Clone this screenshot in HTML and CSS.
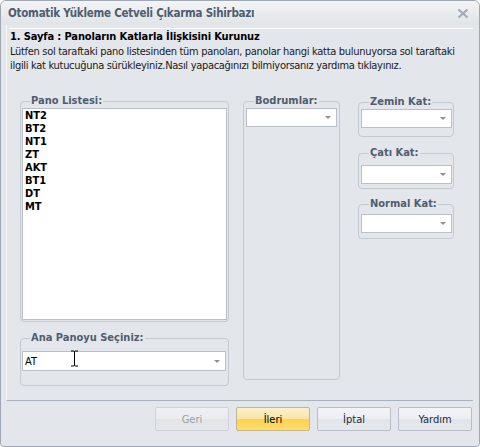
FILE: index.html
```html
<!DOCTYPE html>
<html lang="tr">
<head>
<meta charset="utf-8">
<link rel="stylesheet" href="styles.css">
</head>
<body>
<div class="window">
  <div class="titlebar">
    <span class="title">Otomatik Yükleme Cetveli Çıkarma Sihirbazı</span>
    <svg class="close" width="12" height="11" viewBox="0 0 12 11"><path d="M1.5 1.5 L10.5 9.5 M10.5 1.5 L1.5 9.5" stroke="#a3abb5" stroke-width="2.2" fill="none"/></svg>
  </div>
  <div class="panel">
    <div class="header">1. Sayfa : Panoların Katlarla İlişkisini Kurunuz</div>
    <div class="desc">Lütfen sol taraftaki pano listesinden tüm panoları, panolar hangi katta bulunuyorsa sol taraftaki<br>ilgili kat kutucuğuna sürükleyiniz.Nasıl yapacağınızı bilmiyorsanız yardıma tıklayınız.</div>
    <div class="groups">
      <div class="col col-left">
        <fieldset class="grp grp-list">
          <legend>Pano Listesi:</legend>
          <div class="listbox">
            <div>NT2</div><div>BT2</div><div>NT1</div><div>ZT</div><div>AKT</div><div>BT1</div><div>DT</div><div>MT</div>
          </div>
        </fieldset>
        <fieldset class="grp grp-ana">
          <legend>Ana Panoyu Seçiniz:</legend>
          <div class="combo combo-wide"><span class="val">AT</span><span class="arrow"></span>
            <svg class="ibeam" width="9" height="17" viewBox="0 0 9 17"><path d="M1 1 H3.5 Q4.5 1 4.5 2 V15 Q4.5 16 3.5 16 H1 M8 1 H5.5 Q4.5 1 4.5 2 M4.5 15 Q4.5 16 5.5 16 H8" stroke="#000" stroke-width="1" fill="none"/></svg>
          </div>
        </fieldset>
      </div>
      <div class="col col-mid">
        <fieldset class="grp grp-bod">
          <legend>Bodrumlar:</legend>
          <div class="combo"><span class="val"></span><span class="arrow"></span></div>
        </fieldset>
      </div>
      <div class="col col-right">
        <fieldset class="grp grp-small grp-zemin">
          <legend>Zemin Kat:</legend>
          <div class="combo"><span class="val"></span><span class="arrow"></span></div>
        </fieldset>
        <fieldset class="grp grp-small grp-cati">
          <legend>Çatı Kat:</legend>
          <div class="combo"><span class="val"></span><span class="arrow"></span></div>
        </fieldset>
        <fieldset class="grp grp-small grp-normal">
          <legend>Normal Kat:</legend>
          <div class="combo"><span class="val"></span><span class="arrow"></span></div>
        </fieldset>
      </div>
    </div>
  </div>
  <div class="buttons">
    <button class="btn disabled">Geri</button>
    <button class="btn primary">İleri</button>
    <button class="btn">İptal</button>
    <button class="btn">Yardım</button>
  </div>
</div>
</body>
</html>
```
FILE: styles.css
```css
html, body {
  margin: 0;
  padding: 0;
  background: #ffffff;
}
body {
  font-family: "DejaVu Sans", Verdana, sans-serif;
  font-stretch: condensed;
  font-size: 11px;
  color: #000;
}
.window {
  width: 480px;
  height: 447px;
  box-sizing: border-box;
  border: 1px solid #9ea7b2;
  border-radius: 6px 6px 4px 4px;
  background: #e3e6ea;
  display: flex;
  flex-direction: column;
  overflow: hidden;
}
.titlebar {
  height: 24px;
  flex: none;
  display: flex;
  align-items: center;
  justify-content: space-between;
  padding: 0 10px 0 7px;
  background: linear-gradient(#f3f4f6, #e0e4e8);
}
.title {
  font-weight: bold;
  font-size: 11.5px;
  letter-spacing: -0.25px;
  color: #4f5d70;
}
.close { display: block; }
.panel {
  margin-left: 5px;
  width: 467px;
  height: 376px;
  flex: none;
  box-sizing: border-box;
  border-left: 1px solid #f4f6f8;
  border-bottom: 1px solid #a8b1bc;
  padding: 3px 0 0 2px;
}
.header {
  border-top: 1px solid #ffffff;
  font-weight: bold;
  letter-spacing: -0.12px;
  padding: 1px 0 0 1px;
  line-height: 13px;
  color: #000;
}
.desc {
  padding: 2px 0 0 1px;
  line-height: 14px;
  letter-spacing: -0.3px;
  color: #1a1a1a;
  white-space: nowrap;
}
.groups {
  display: flex;
  padding: 21px 0 0 11px;
}
.col { display: flex; flex-direction: column; }
.col-left { width: 209px; gap: 9px; }
.col-mid { width: 97px; margin-left: 14px; }
.col-right { width: 96px; margin-left: 18px; padding-top: 1px; }
.grp {
  margin: 0;
  border: 1px solid #c4cad1;
  border-radius: 4px;
  padding: 0;
  min-width: 0;
  box-sizing: border-box;
}
.grp legend {
  margin-left: 8px;
  padding: 0 1px 1px 1px;
  font-weight: bold;
  color: #505d70;
  line-height: 13px;
}
.grp-list { height: 228px; padding: 0 1px 1px 1px; }
.grp-ana { height: 55px; padding: 6px 2px 0 1px; }
.grp-bod { height: 286px; padding: 0 2px 0 2px; }
.grp-small { padding: 0 1px 0 2px; }
.grp-zemin { height: 42px; }
.grp-cati { height: 43px; padding-top: 5px; margin-top: 9px; }
.grp-normal { height: 42px; padding-top: 3px; margin-top: 8px; }
.listbox {
  height: 212px;
  background: #fff;
  border: 1px solid #b7bfc9;
  padding: 0 2px;
  box-sizing: border-box;
  font-weight: bold;
  line-height: 13px;
}
.combo {
  position: relative;
  height: 19px;
  background: #fff;
  border: 1px solid #b9c0c9;
  box-sizing: border-box;
  display: flex;
  align-items: center;
  justify-content: space-between;
  padding: 0 5px 0 2px;
}
.combo-wide { height: 20px; }
.val { color: #000; }
.arrow {
  width: 0;
  height: 0;
  border-left: 3px solid transparent;
  border-right: 3px solid transparent;
  border-top: 3px solid #8a929c;
}
.ibeam {
  position: absolute;
  left: 47px;
  top: -2px;
}
.buttons {
  flex: 1;
  display: flex;
  justify-content: flex-end;
  align-items: flex-start;
  gap: 7px;
  padding: 6px 7px 0 0;
}
.btn {
  width: 74px;
  height: 24px;
  box-sizing: border-box;
  border: 1px solid #b8bec7;
  border-radius: 2px;
  background: linear-gradient(#f3f4f6 0%, #eceef1 50%, #e1e4e8 51%, #e6e9ec 100%);
  font-family: inherit;
  font-stretch: inherit;
  font-size: 11px;
  color: #1c2a3c;
  padding: 0;
}
.btn.primary {
  border-color: #c2b68a;
  background: linear-gradient(#fbf0cc 0%, #f8e5a6 50%, #ffd24f 51%, #ffdd70 100%);
  color: #000;
}
.btn.disabled {
  color: #9aa1aa;
  border-color: #cdd2d8;
  background: linear-gradient(#eef0f2 0%, #e9ebee 50%, #e2e5e8 51%, #e6e8eb 100%);
}
```
